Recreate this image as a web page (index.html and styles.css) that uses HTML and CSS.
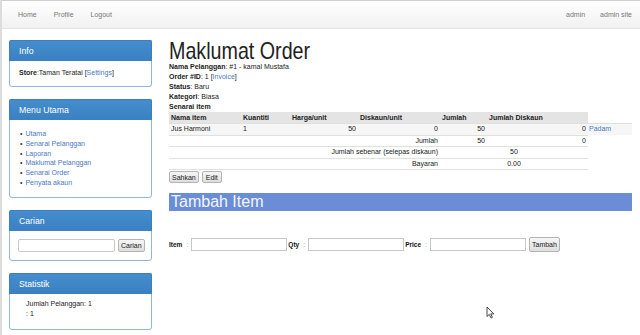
FILE: index.html
```html
<!DOCTYPE html>
<html lang="ms">
<head>
    <meta charset="UTF-8">
    <title>Maklumat Order</title>
    <link rel="stylesheet" href="styles.css">
</head>
<body>
    <nav class="topbar">
        <ul class="nav-links">
            <li><a href="#">Home</a></li>
            <li><a href="#">Profile</a></li>
            <li><a href="#">Logout</a></li>
        </ul>
        <ul class="nav-links nav-right">
            <li><a href="#">admin</a></li>
            <li><a href="#">admin site</a></li>
        </ul>
    </nav>

    <div class="page">
        <aside class="sidebar">
            <div class="panel">
                <div class="panel-heading">Info</div>
                <div class="panel-body info-body">
                    <b>Store</b>:Taman Teratai [<a href="#">Settings</a>]
                </div>
            </div>
            <div class="panel">
                <div class="panel-heading">Menu Utama</div>
                <div class="panel-body">
                    <ul class="menu">
                        <li><a href="#">Utama</a></li>
                        <li><a href="#">Senarai Pelanggan</a></li>
                        <li><a href="#">Laporan</a></li>
                        <li><a href="#">Maklumat Pelanggan</a></li>
                        <li><a href="#">Senarai Order</a></li>
                        <li><a href="#">Penyata akaun</a></li>
                    </ul>
                </div>
            </div>
            <div class="panel">
                <div class="panel-heading">Carian</div>
                <div class="panel-body search-body">
                    <input type="text" class="search-input">
                    <button class="btn">Carian</button>
                </div>
            </div>
            <div class="panel">
                <div class="panel-heading">Statistik</div>
                <div class="panel-body stat-body">
                    <div>Jumlah Pelanggan: 1</div>
                    <div>: 1</div>
                </div>
            </div>
        </aside>

        <main class="content">
            <h1>Maklumat Order</h1>
            <div class="detail"><b>Nama Pelanggan</b>: #1 - kamal Mustafa</div>
            <div class="detail"><b>Order #ID</b>: 1 [<a href="#">Invoice</a>]</div>
            <div class="detail"><b>Status</b>: Baru</div>
            <div class="detail"><b>Kategori</b>: Biasa</div>
            <div class="detail"><b>Senarai item</b></div>

            <table class="items">
                <colgroup>
                    <col style="width:72px">
                    <col style="width:49px">
                    <col style="width:68px">
                    <col style="width:82px">
                    <col style="width:47px">
                    <col style="width:101px">
                    <col style="width:44px">
                </colgroup>
                <tr>
                    <th>Nama item</th>
                    <th>Kuantiti</th>
                    <th>Harga/unit</th>
                    <th>Diskaun/unit</th>
                    <th>Jumlah</th>
                    <th>Jumlah Diskaun</th>
                </tr>
                <tr class="striped">
                    <td>Jus Harmoni</td>
                    <td>1</td>
                    <td class="num">50</td>
                    <td class="num">0</td>
                    <td class="num">50</td>
                    <td class="num">0</td>
                    <td class="action"><a href="#">Padam</a></td>
                </tr>
                <tr>
                    <td colspan="4" class="num">Jumlah</td>
                    <td class="num">50</td>
                    <td class="num">0</td>
                </tr>
                <tr>
                    <td colspan="4" class="num">Jumlah sebenar (selepas diskaun)</td>
                    <td colspan="2" class="mid">50</td>
                </tr>
                <tr class="last">
                    <td colspan="4" class="num">Bayaran</td>
                    <td colspan="2" class="mid">0.00</td>
                </tr>
            </table>

            <div class="actions">
                <button class="btn">Sahkan</button>
                <button class="btn btn-edit">Edit</button>
            </div>

            <h2 class="section-bar">Tambah Item</h2>

            <form class="add-form">
                <b class="lbl">Item</b><span class="colon">:</span>
                <input type="text" class="field">
                <b class="lbl">Qty</b><span class="colon">:</span>
                <input type="text" class="field">
                <b class="lbl">Price</b><span class="colon">:</span>
                <input type="text" class="field">
                <button type="button" class="btn btn-add">Tambah</button>
            </form>
        </main>
    </div>

    <svg class="cursor" width="9" height="13" viewBox="0 0 9 13">
        <path d="M1 1 L1 10.5 L3.3 8.4 L5 12 L6.4 11.3 L4.8 7.9 L7.8 7.9 Z" fill="#fff" stroke="#333" stroke-width="0.9" stroke-linejoin="round"/>
    </svg>
</body>
</html>
```

FILE: styles.css
```css
body {
    margin: 0;
    min-height: 335px;
    box-sizing: border-box;
    border-left: 2px solid #dcdcdc;
    font-family: "Liberation Sans", Arial, sans-serif;
    font-size: 7px;
    color: #222;
    background: #fff;
}
a {
    color: #4a78c2;
    text-decoration: none;
}

/* bar atas */
.topbar {
    display: flex;
    justify-content: space-between;
    height: 27px;
    border-top: 1px solid #cfcfcf;
    border-bottom: 1px solid #e3e3e3;
    background: linear-gradient(#ffffff, #f1f1f1);
}
.nav-links {
    list-style: none;
    margin: 0;
    padding: 0 0 0 16px;
    display: flex;
    gap: 17px;
    line-height: 27px;
}
.nav-links a {
    color: #777;
}
.nav-right {
    padding: 0 8px 0 0;
    gap: 15px;
}

.page {
    display: flex;
    align-items: flex-start;
    padding: 11px 8px 0 7px;
}

/* sidebar */
.sidebar {
    width: 143px;
    flex-shrink: 0;
}
.panel {
    border: 1px solid #93b5da;
    border-radius: 3px;
    margin-bottom: 12px;
    background: #fff;
}
.panel-heading {
    background: linear-gradient(#458dcd, #3a80c2);
    color: #fff;
    font-size: 8.7px;
    line-height: 20px;
    padding: 0 9px;
    border-radius: 2px 2px 0 0;
    margin: -1px -1px 0;
    border: 1px solid #3a7fc0;
    border-bottom: none;
}
.panel-body {
    padding: 9px;
    line-height: 8px;
}
.info-body {
    padding: 8px 9px 9px;
}
.menu {
    margin: 0;
    padding: 0 0 0 1px;
    list-style: none;
    line-height: 9.8px;
}
.menu li::before {
    content: "\2022";
    margin-right: 3px;
    color: #333;
}
.search-body {
    display: flex;
    gap: 3px;
    padding: 8px 8px 8px;
}
.search-input {
    width: 97px;
    height: 13px;
    box-sizing: border-box;
    border: 1px solid #c9c9c9;
    border-radius: 2px;
    padding: 0;
    margin: 0;
}
.stat-body {
    line-height: 10px;
    padding: 5px 9px 10px 16px;
}

.btn {
    font-family: "Liberation Sans", Arial, sans-serif;
    font-size: 7px;
    color: #222;
    height: 13px;
    padding: 0 2px;
    margin: 0;
    border: 1px solid #b4b4b4;
    border-radius: 2px;
    background: linear-gradient(#f6f6f6, #dedede);
}

/* kandungan */
.content {
    margin-left: 17px;
    width: 463px;
}
.content h1 {
    font-size: 24px;
    font-weight: normal;
    line-height: 22px;
    margin: 0;
    color: #222;
    transform: scaleX(0.82);
    transform-origin: left center;
}
.detail {
    line-height: 10px;
}
.items {
    border-collapse: collapse;
    table-layout: fixed;
    width: 463px;
}
.items th {
    background: #e4e4e4;
    text-align: left;
    line-height: 11px;
    padding: 0 2px;
}
.items td {
    border-top: 1px solid #e0e0e0;
    line-height: 10.5px;
    padding: 0 2px;
    white-space: nowrap;
}
.items .last td {
    border-bottom: 1px solid #e0e0e0;
}
.items .striped {
    background: #f6f6f6;
}
.items .num {
    text-align: right;
}
.items .mid {
    text-align: center;
}
.items .action {
    padding-left: 1px;
}

.actions {
    display: flex;
    gap: 3px;
    margin-top: 1px;
}
.actions .btn {
    height: 12px;
}
.btn-edit {
    padding: 0 3px;
}

.section-bar {
    margin: 10px 0 0;
    background: #6b8dd7;
    color: #f4f6ff;
    font-size: 16px;
    font-weight: normal;
    line-height: 18px;
    padding: 0 2px;
}

.add-form {
    display: flex;
    align-items: center;
    margin-top: 26px;
}
.lbl {
    font-size: 6.5px;
    color: #111;
    margin-right: 4px;
}
.colon {
    color: #999;
    margin-right: 3px;
}
.field {
    width: 96px;
    height: 13px;
    box-sizing: border-box;
    border: 1px solid #c6c6c6;
    padding: 0;
    margin: 0 1px 0 0;
}
.btn-add {
    margin-left: 2px;
    height: 15px;
}

.cursor {
    position: absolute;
    left: 486px;
    top: 306px;
}
```
